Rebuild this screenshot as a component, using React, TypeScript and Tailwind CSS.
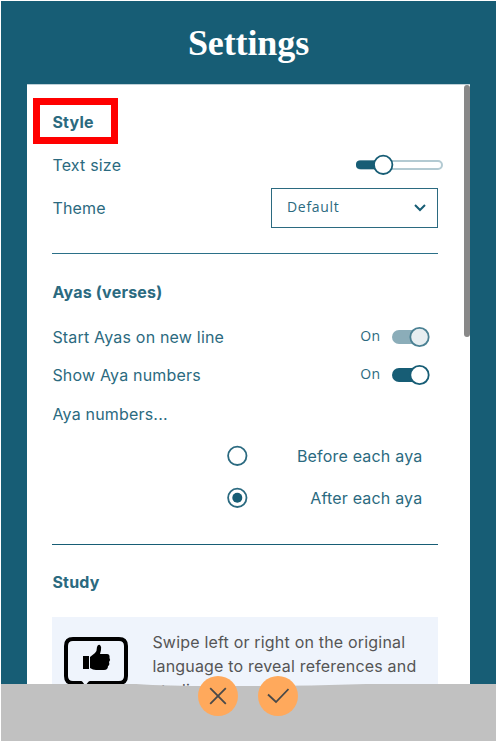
import type { ReactNode } from "react";

function Row({ className, children }: { className: string; children: ReactNode }) {
  return <div className={`flex shrink-0 items-center justify-between ${className}`}>{children}</div>;
}

function Toggle({ muted = false }: { muted?: boolean }) {
  return (
    <div className="mr-2 flex items-center gap-[11px]">
      <span className="relative -top-px font-['Open_Sans',sans-serif] text-[14px] tracking-[0.4px]">On</span>
      <svg width="39" height="22" viewBox="0 0 39 22">
        <rect x="1" y="4" width="36" height="14" rx="7" fill={muted ? "#8badb9" : "#175d75"} />
        <circle cx="28.5" cy="11" r="9.2" fill={muted ? "#e7eef1" : "#fff"} stroke={muted ? "#4a8093" : "#175d75"} strokeWidth="1.8" />
      </svg>
    </div>
  );
}

function Radio({ checked = false }: { checked?: boolean }) {
  return (
    <svg className="ml-[174px]" width="22" height="22" viewBox="0 0 22 22">
      <circle cx="11.3" cy="10.8" r="9.2" fill="#fff" stroke="#2b6a80" strokeWidth="1.8" />
      {checked && <circle cx="11.3" cy="10.8" r="5" fill="#175d75" />}
    </svg>
  );
}

export default function App() {
  return (
    <div className="relative h-[741px] w-[496px] overflow-hidden bg-white pl-px pt-px font-['Inter',sans-serif] text-[16px] leading-6 tracking-[0.19px] text-[#2b6a80]">
      <div className="flex h-[740px] flex-col bg-[#175d75]">
        <h1 className="flex h-[83px] shrink-0 items-center justify-center font-['Liberation_Serif',serif] text-[36px] font-bold tracking-[-0.1px] text-white">
          Settings
        </h1>
        <main className="relative ml-[26px] flex h-[603px] w-[443px] shrink-0 flex-col overflow-hidden border-t border-[#bfd0d7] bg-white pl-[25.4px] pr-[31.6px] pt-4">
          <Row className="h-[42px]"><h2 className="font-bold tracking-[0.22px]">Style</h2></Row>
          <Row className="h-11">
            <span>Text size</span>
            <svg className="-mr-[5px]" width="89" height="22" viewBox="0 0 89 22">
              <rect x="3" y="7" width="85" height="8" rx="4" fill="#fff" stroke="#b3cad2" strokeWidth="2" />
              <rect x="2" y="6.5" width="34" height="8.5" rx="4" fill="#175d75" />
              <circle cx="29.2" cy="10.8" r="9.2" fill="#fff" stroke="#175d75" strokeWidth="1.8" />
            </svg>
          </Row>
          <Row className="h-[42px]">
            <span>Theme</span>
            <div className="flex h-10 w-[167.4px] items-center justify-between border border-[#2b6a80] pl-[15px] pr-[11px] font-['Open_Sans',sans-serif] text-[14px]">
              <span className="relative -top-px tracking-[0.7px]">Default</span>
              <svg width="12" height="8" viewBox="0 0 12 8" fill="none" stroke="#175d75" strokeWidth="2"><path d="M1 1l5 5 5-5" /></svg>
            </div>
          </Row>
          <hr className="mt-6 border-[#2b7088]" />
          <Row className="mt-[17px] h-[42px]"><h2 className="font-bold tracking-[0.22px]">Ayas (verses)</h2></Row>
          <Row className="h-12"><span>Start Ayas on new line</span><Toggle muted /></Row>
          <Row className="h-7"><span>Show Aya numbers</span><Toggle /></Row>
          <Row className="h-[50px]"><span>Aya numbers...</span></Row>
          <Row className="h-[34px] pr-4"><Radio /><span>Before each aya</span></Row>
          <Row className="h-[50px] pr-4"><Radio checked /><span>After each aya</span></Row>
          <hr className="mt-[21px] border-[#175d75]" />
          <Row className="mt-4 h-[42px]"><h2 className="font-bold tracking-[0.22px]">Study</h2></Row>
          <div className="mt-[14px] flex h-[120px] shrink-0 bg-[#eff4fc] pl-3 pt-[13px] tracking-[0.19px] text-[#555]">
            <svg className="mt-[6px] shrink-0" width="64" height="64" viewBox="0 0 64 64">
              <path d="M17 47H9Q2 47 2 40V10Q2 3 9 3H55Q62 3 62 10V40Q62 47 55 47H26L21 53Z" fill="#eff4fc" stroke="#000" strokeWidth="4" strokeLinejoin="round" />
              <path d="M19 20H25V33H19Z" fill="#000" />
              <path d="M26 21L31 17Q33 15 33 11Q34 8 36 9Q38 11 37 14L36 18H43Q46 18 45.5 22Q47 24 45 26Q46 29 44 30Q44 34 40 34H32Q29 34 26 32Z" fill="#000" />
            </svg>
            <p className="ml-6 w-[275px]">Swipe left or right on the original<br />language to reveal references and<br />studies</p>
          </div>
          <div className="absolute right-0 top-0 h-[252px] w-[6px] rounded-[3px] bg-[#888]" />
        </main>
      </div>
      <footer className="absolute bottom-0 left-px h-[66px] w-[495px]">
        <svg className="absolute inset-0" width="495" height="66" viewBox="0 0 495 66">
          <path d="M0 9H135Q165 11 215 11H255Q310 11 365 9H495V66H0Z" fill="#c1c1c1" />
        </svg>
        <div className="relative flex gap-[20.4px] pl-[197px] pt-[0.7px]">
          <button className="flex size-10 items-center justify-center rounded-full bg-[#ffa95c]" aria-label="Cancel">
            <svg width="18" height="18" viewBox="0 0 18 18" fill="none" stroke="#494949" strokeWidth="1.8"><path d="M1.2 1.2l15.6 15.6M16.8 1.2L1.2 16.8" /></svg>
          </button>
          <button className="flex size-10 items-center justify-center rounded-full bg-[#ffa95c]" aria-label="Confirm">
            <svg width="22" height="16" viewBox="0 0 22 16" fill="none" stroke="#494949" strokeWidth="1.8"><path d="M1 6.5l8 7.5L21.5 1" /></svg>
          </button>
        </div>
      </footer>
      <div className="absolute left-[33px] top-[98px] h-[46px] w-[85px] border-[7px] border-[#f00]" />
    </div>
  );
}
